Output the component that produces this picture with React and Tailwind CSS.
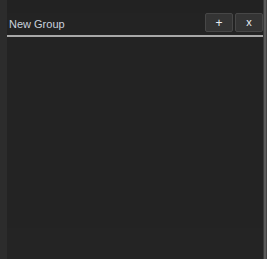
export default function App() {
  return (
    <div className="flex h-[259px] w-[267px] bg-[#2b2b2b]" style={{ fontFamily: '"Liberation Sans", Arial, sans-serif' }}>
      <div className="w-[7px] bg-[#2c2c2c]" />
      <div className="flex flex-1 flex-col bg-[#232323]">
        <div className="h-[13px] bg-[#222222]" />
        <div className="flex h-[22px] items-start justify-between">
          <span className="mt-[5px] pl-[2px] text-[11px] leading-[13px] text-[#c9d1dd]">New Group</span>
          <div className="flex gap-[2px]">
            <button className="flex h-[19px] w-[28px] items-center justify-center rounded-[2px] border border-[#474747] bg-[#343434] text-[12px] leading-none text-[#e8eef5]">+</button>
            <button className="flex h-[19px] w-[28px] items-center justify-center rounded-[2px] border border-[#474747] bg-[#343434] text-[11px] leading-none text-[#e8eef5]">x</button>
          </div>
        </div>
        <div className="h-[2px] bg-[#a8a8a8]" />
        <div className="flex-1 bg-[#232323]" />
        <div className="h-[31px] bg-[#242424]" />
      </div>
      <div className="w-[1px] bg-[#3a3a3a]" />
      <div className="w-[2px] bg-[#5a5a5a]" />
      <div className="w-[1px] bg-[#444444]" />
    </div>
  );
}
